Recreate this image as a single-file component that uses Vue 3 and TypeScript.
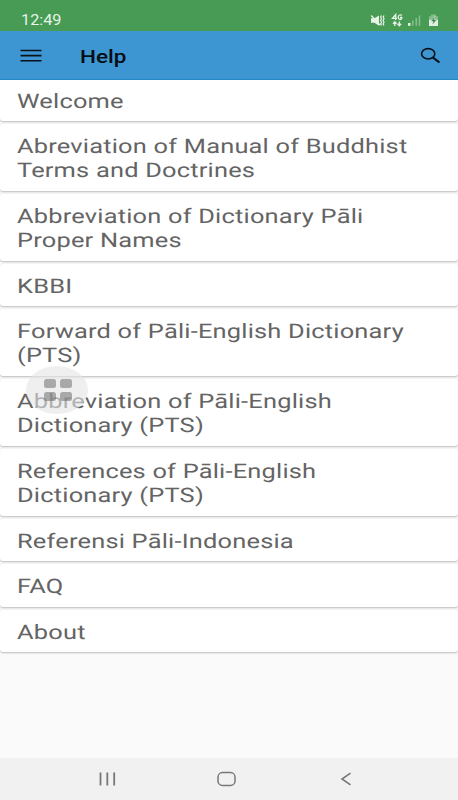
<script setup lang="ts">
interface HelpItem {
  id: number
  lines: string[]
}

const items: HelpItem[] = [
  ['Welcome'],
  ['Abreviation of Manual of Buddhist', 'Terms and Doctrines'],
  ['Abbreviation of Dictionary Pāli', 'Proper Names'],
  ['KBBI'],
  ['Forward of Pāli-English Dictionary', '(PTS)'],
  ['Abbreviation of Pāli-English', 'Dictionary (PTS)'],
  ['References of Pāli-English', 'Dictionary (PTS)'],
  ['Referensi Pāli-Indonesia'],
  ['FAQ'],
  ['About'],
].map((lines, id) => ({ id, lines }))
</script>

<template>
  <div class="screen">
    <div class="status">
      <span class="clock">12:49</span>
      <svg class="indicators" width="72" height="16" viewBox="0 0 72 16">
        <path d="M1 5.300h3.500L9 2.500v10.300L4.500 9.800H1z" fill="#e6f3e6" />
        <path d="M1.200 2.500l8.800 9.500" stroke="#e6f3e6" stroke-width="1.300" />
        <path d="M11.500 2.500l-.9 1.600.9 1.700-.9 1.700.9 1.700-.9 1.700.9 1.600M14 2.500l-.9 1.600.9 1.700-.9 1.700.9 1.700-.9 1.700.9 1.600" fill="none" stroke="#e6f3e6" stroke-width="1.200" />
        <g fill="none" stroke="#e6f3e6" stroke-width="1.300">
          <path d="M25.700 7V1.500L22.500 5.300h4.400" />
          <path d="M31.700 2.500c-.8-1-3.500-.9-3.500 1.700s2.700 2.800 3.500 1.500V4.500H30" />
          <path d="M24.800 13V9M23 10.800l1.800-2 1.800 2M29.300 8.500v4M27.500 10.700l1.800 2 1.800-2" />
        </g>
        <path d="M38 10h2.500v2.800H38z" fill="#e6f3e6" />
        <path d="M42 7.500h1.600v5.300H42zM45.500 5h1.600v7.800h-1.600zM48.700 2.500h1.600v10.300h-1.600z" fill="#84bd8c" />
        <path d="M59 3.200h2V1.500h5v1.700h2V6h-9z" fill="#84bd8c" />
        <path d="M59 6.500h9V13h-9z" fill="#e0efe0" />
        <path d="M65 3l-4 5.200h2.200l-.8 3.500L66.500 7H64z" fill="#2f7c3e" stroke="#e6f3e6" stroke-width=".4" />
      </svg>
    </div>
    <header class="bar">
      <svg class="menu" width="22" height="14" viewBox="0 0 22 14">
        <path d="M.5 1.500h21M.5 6.600h21M.5 11.700h21" stroke="#0a1118" stroke-width="1.600" />
      </svg>
      <h1>Help</h1>
      <svg class="search" width="22" height="18" viewBox="0 0 22 18">
        <ellipse cx="8.200" cy="6.800" rx="6.600" ry="5.200" fill="none" stroke="#0a1118" stroke-width="1.600" />
        <path d="M12.700 10.300l6.800 5.200" stroke="#0a1118" stroke-width="2.100" />
      </svg>
    </header>
    <main class="list">
      <article v-for="item in items" :key="item.id" class="card">
        <span v-for="line in item.lines" :key="line" class="line">{{ line }}</span>
      </article>
    </main>
    <div class="floating">
      <i></i><i></i><i></i><i></i>
    </div>
    <nav class="nav">
      <svg width="22" height="18" viewBox="0 0 22 18">
        <path d="M4.500 2.500v13M11.300 2.500v13M18.200 2.500v13" stroke="#777" stroke-width="1.800" />
      </svg>
      <svg width="22" height="18" viewBox="0 0 22 18">
        <rect x="2" y="2.600" width="17" height="12.800" rx="4.500" fill="none" stroke="#777" stroke-width="1.500" />
      </svg>
      <svg width="22" height="18" viewBox="0 0 22 18">
        <path d="M15.500 3.200L7 9l8.500 5.800" fill="none" stroke="#777" stroke-width="1.600" />
      </svg>
    </nav>
  </div>
</template>

<style>
body {
  margin: 0;
}
</style>

<style scoped>
.screen {
  position: relative;
  width: 458px;
  height: 800px;
  display: flex;
  flex-direction: column;
  overflow: hidden;
  background: #fafafa;
  font-family: Roboto, "Noto Sans", sans-serif;
}
.status {
  flex: none;
  height: 31px;
  box-sizing: border-box;
  padding: 11px 16px 0 21px;
  display: flex;
  justify-content: space-between;
  align-items: flex-start;
  background: #479b55;
}
.clock {
  font-size: 14px;
  line-height: 19px;
  color: #e6f3e6;
  transform: scaleX(1.16);
  transform-origin: 0 0;
}
.indicators {
  margin-top: 2px;
}
.bar {
  z-index: 1;
  flex: none;
  height: 49px;
  box-sizing: border-box;
  padding: 2px 16px 0 20px;
  display: flex;
  align-items: center;
  background: #3d96d2;
  border-bottom: 1px solid #2388c6;
}
h1 {
  flex: 1;
  margin: 1px 0 0 38px;
  font-size: 18px;
  line-height: 24px;
  font-weight: 500;
  color: #070d12;
  transform: scaleX(1.25);
  transform-origin: 0 0;
}
.list {
  flex: 1;
  margin-top: -1.400px;
  display: flex;
  flex-direction: column;
  gap: 3px;
}
.card {
  padding: 10px 17px 8.450px;
  display: flex;
  flex-direction: column;
  align-items: flex-start;
  background: #fff;
  border-radius: 3px;
  box-shadow: 0 1px 2px rgba(0, 0, 0, 0.26);
}
.line {
  font-size: 20px;
  line-height: 24.150px;
  letter-spacing: 0.160px;
  color: #646464;
  white-space: nowrap;
  text-rendering: geometricPrecision;
  transform: scaleX(1.27);
  transform-origin: 0 0;
}
.floating {
  position: absolute;
  left: 26px;
  top: 366px;
  width: 62px;
  height: 48px;
  box-sizing: border-box;
  padding: 12.500px 16px 12px 18px;
  display: grid;
  grid-template-columns: 12px 12px;
  grid-template-rows: 9.500px 9.500px;
  gap: 3.500px 4px;
  border-radius: 50%;
  background: rgba(228, 228, 228, 0.6);
}
.floating i {
  border-radius: 2.500px;
  background: rgba(100, 100, 100, 0.5);
}
.nav {
  flex: none;
  height: 42px;
  display: flex;
  align-items: center;
  justify-content: space-between;
  padding: 0 101px 0 96px;
  background: #f1f1f1;
}
</style>
